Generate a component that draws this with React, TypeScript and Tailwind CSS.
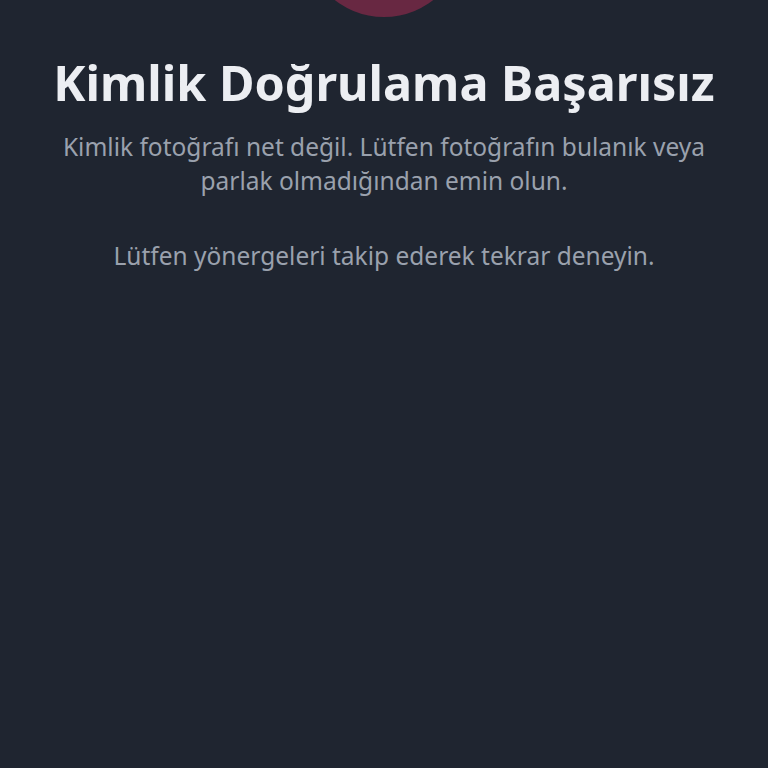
export default function App() {
  return (
    <div
      className="min-h-screen w-full overflow-hidden bg-[#1f2530] flex flex-col items-center text-center"
      style={{ fontFamily: '"Noto Sans", "Open Sans", sans-serif' }}
    >
      <div className="-mt-[143px] h-40 w-40 shrink-0 rounded-full bg-[#682842]" />
      <h1 className="mt-[37px] text-[48.5px] leading-[56px] font-bold text-[#eceef2]">
        Kimlik Doğrulama Başarısız
      </h1>
      <p className="mt-[20px] max-w-[660px] text-[24.5px] leading-[34px] text-[#9aa1ad]">
        Kimlik fotoğrafı net değil. Lütfen fotoğrafın bulanık veya parlak olmadığından emin olun.
      </p>
      <p className="mt-[41px] text-[24.5px] leading-[34px] text-[#9aa1ad]">
        Lütfen yönergeleri takip ederek tekrar deneyin.
      </p>
    </div>
  );
}
